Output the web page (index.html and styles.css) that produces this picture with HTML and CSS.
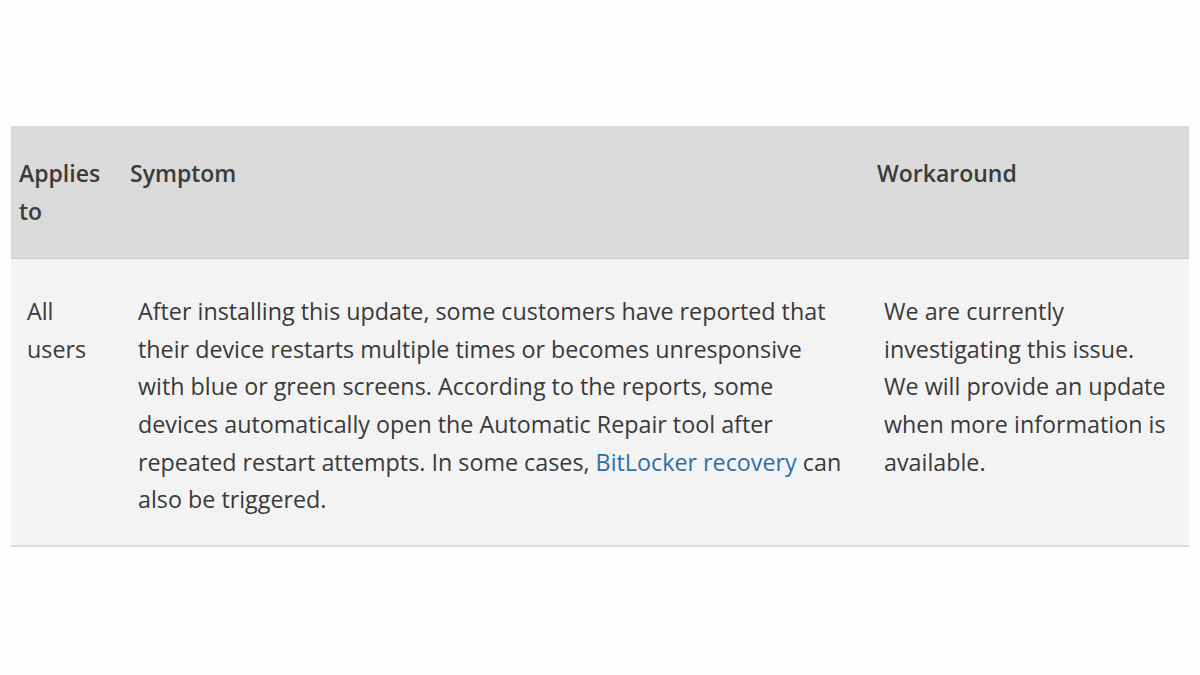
FILE: index.html
```html
<!DOCTYPE html>
<html>
<head>
<meta charset="utf-8">
<link rel="stylesheet" href="styles.css">
</head>
<body>
<div class="page">
  <table class="issues">
    <colgroup>
      <col class="c1"><col class="c2"><col class="c3">
    </colgroup>
    <thead>
      <tr>
        <th class="h1">Applies to</th>
        <th>Symptom</th>
        <th>Workaround</th>
      </tr>
    </thead>
    <tbody>
      <tr>
        <td class="d1">All users</td>
        <td class="d2">After installing this update, some customers have reported that their device restarts multiple times or becomes unresponsive with blue or green screens. According to the reports, some devices automatically open the Automatic Repair tool after repeated restart attempts. In some cases, <a href="#">BitLocker recovery</a> can also be triggered.</td>
        <td class="d3">We are currently investigating this issue. We will provide an update when more information is available.</td>
      </tr>
    </tbody>
  </table>
</div>
</body>
</html>
```

FILE: styles.css
```css
html, body {
  margin: 0;
  padding: 0;
  background: #fdfdfd;
}
body {
  width: 1200px;
  height: 675px;
  overflow: hidden;
  font-family: "Open Sans", "Noto Sans", sans-serif;
  color: #3a3a3a;
}
.page {
  padding: 126px 11px 0 11px;
}
.issues {
  width: 1178px;
  border-collapse: collapse;
  table-layout: fixed;
  font-size: 23.3px;
  line-height: 37.6px;
}
.c1 { width: 111px; }
.c2 { width: 747px; }
.c3 { width: 320px; }
thead tr {
  background: #dadada;
}
th {
  text-align: left;
  vertical-align: top;
  font-weight: 600;
  font-size: 23px;
  color: #3b3b3b;
  padding: 29px 8px 28px 8px;
  border-bottom: 1px solid #cfcfcf;
}
tbody tr {
  background: #f3f3f3;
  border-bottom: 2px solid #dcdcdc;
}
td {
  vertical-align: top;
  padding: 34px 16px 26px 16px;
}
td.d3 {
  padding-left: 15px;
  padding-right: 17px;
}
a {
  color: #2f6fa6;
  text-decoration: none;
}
```
